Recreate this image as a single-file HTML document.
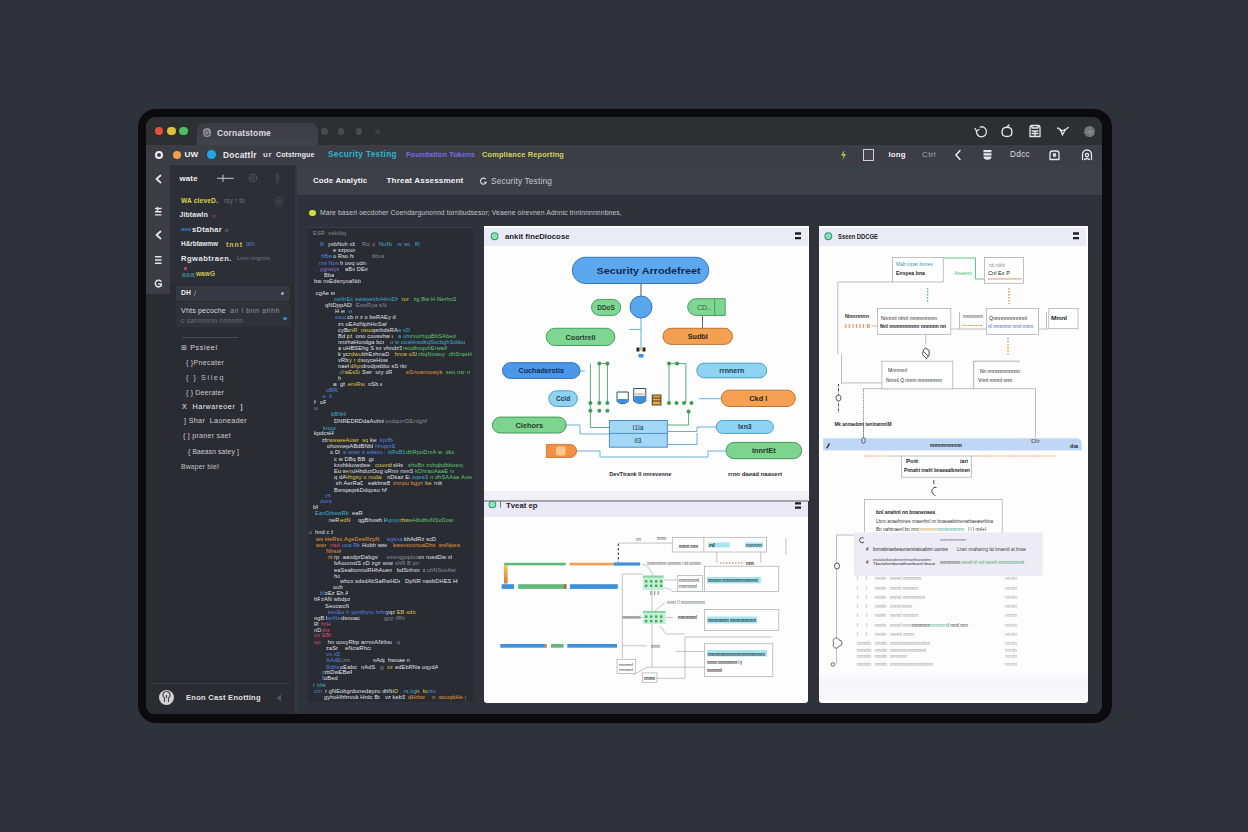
<!DOCTYPE html><html><head><meta charset="utf-8"><style>
html,body{margin:0;padding:0;}
body{width:1248px;height:832px;background:#2f323a;position:relative;overflow:hidden;font-family:"Liberation Sans",sans-serif;}
.a{position:absolute;box-sizing:border-box;}
.t{white-space:nowrap;}
.cd{font-size:5.6px;line-height:7px;height:7px;overflow:hidden;white-space:nowrap;font-weight:400;letter-spacing:0.15px;}
</style></head><body>
<div class="a" style="left:138px;top:109px;width:974px;height:614px;background:#0b0b0d;border-radius:18px;"></div>
<div class="a" style="left:146px;top:117px;width:956px;height:597px;background:#2b2c31;border-radius:9px;overflow:hidden;"></div>
<div class="a" style="left:0;top:0;width:1248px;height:832px;clip-path:inset(117px 146px 118px 146px round 8px)">
<div class="a" style="left:146px;top:117px;width:956px;height:28px;background:#2e2f33;border-radius:9px 9px 0 0;"></div>
<div class="a" style="left:154.7px;top:126.7px;width:8.6px;height:8.6px;border-radius:50%;background:#e8503a;"></div>
<div class="a" style="left:167.0px;top:126.7px;width:8.6px;height:8.6px;border-radius:50%;background:#e0c03a;"></div>
<div class="a" style="left:179.29999999999998px;top:126.7px;width:8.6px;height:8.6px;border-radius:50%;background:#4cc060;"></div>
<div class="a" style="left:197px;top:123px;width:121px;height:22px;background:linear-gradient(#3b3c43,#42434b);border-radius:7px 7px 0 0;"></div>
<div class="a" style="left:202.8px;top:128.3px;width:8.4px;height:8.4px;border-radius:50%;background:#8e8f94;"></div>
<svg class="a" style="left:203px;top:128.5px" width="8" height="8" viewBox="0 0 8 8" fill="none" stroke="#4a4b50" stroke-width="1"><path d="M5.6 2.4 A2.3 2.3 0 1 0 6.2 4.6 L4.2 4.6"/></svg>
<div class="a t" style="left:217px;top:127.8px;font-size:8.49px;line-height:10.49px;color:#dcdce0;font-weight:700;letter-spacing:0.15px;">Cornatstome</div>
<div class="a" style="left:321.3px;top:128.3px;width:6.4px;height:6.4px;border-radius:50%;background:#4a4b50;"></div>
<div class="a" style="left:337.8px;top:128.3px;width:6.4px;height:6.4px;border-radius:50%;background:#4a4b50;"></div>
<div class="a" style="left:355.8px;top:128.3px;width:6.4px;height:6.4px;border-radius:50%;background:#4a4b50;"></div>
<div class="a" style="left:374.5px;top:129.0px;width:5.0px;height:5.0px;border-radius:50%;background:#3e3f44;"></div>
<div class="a" style="left:146px;top:145px;width:956px;height:20px;background:#3d3e45;"></div>
<div class="a" style="left:296px;top:165px;width:806px;height:30px;background:#3e4048;"></div>
<div class="a" style="left:146px;top:165px;width:24px;height:129px;background:#3b3c44;"></div>
<div class="a" style="left:146px;top:294px;width:24px;height:420px;background:#2b2c31;"></div>
<div class="a" style="left:296px;top:195px;width:806px;height:519px;background:#30323b;"></div>
<div class="a" style="left:308px;top:227px;width:165px;height:475px;background:#2a2c33;border-top:1px solid #3c3e46;"></div>
<div class="a" style="left:484px;top:226px;width:325px;height:271px;background:#fdfdfe;"></div>
<div class="a" style="left:484px;top:227.5px;width:324px;height:18.5px;background:#ebeaf7;"></div>
<div class="a" style="left:484px;top:491px;width:325px;height:10px;background:#f1f0f7;"></div>
<div class="a" style="left:484px;top:501px;width:324px;height:202px;background:#fdfdfe;border-radius:0 0 3px 3px;"></div>
<div class="a" style="left:484px;top:501px;width:324px;height:16px;background:#ebe9f7;"></div>
<div class="a" style="left:819px;top:226px;width:269px;height:477px;background:#fdfdfe;border-radius:0 0 3px 3px;"></div>
<div class="a" style="left:819px;top:227.5px;width:267px;height:18.5px;background:#ebeaf7;"></div>
<svg class="a" style="left:960px;top:118px" width="140" height="28" viewBox="960 118 140 28" fill="none" stroke="#e6e6ea" stroke-width="1.3" stroke-linecap="round" stroke-linejoin="round"><path d="M975 128.5 L976.5 131 L979 129.5 M976.5 131 A5 5 0 1 0 980 127"/><path d="M1003 128.5 Q1007 126 1011 128.5 Q1013 132 1011 135.5 Q1007 137.5 1003 135.5 Q1001 132 1003 128.5 M1007 127 L1009 125"/><path d="M1030 128 Q1030 125.5 1032 125.5 L1038 125.5 Q1040 125.5 1040 128 L1040 136.5 L1030 136.5 Z M1032 131 L1038 131 M1032 133.5 L1038 133.5 M1035 131 L1035 136.5 M1032 125.5 L1032 128 L1038 128 L1038 125.5"/><path d="M1057.5 128 Q1060.5 128.5 1062.5 135 Q1065 129 1068.5 127.5 M1060.2 129.2 Q1062.8 132 1064.5 129.5"/></svg>
<div class="a" style="left:1084.3px;top:126.0px;width:11.0px;height:11.0px;border-radius:50%;background:#6e6f74;"></div>
<svg class="a" style="left:1083px;top:125px" width="14" height="14" viewBox="0 0 14 14" stroke="#9a9ba0" stroke-width="0.8" fill="none"><path d="M3 4 L11 10 M7 2 L7 12 M2.5 8 L11 6"/></svg>
<div class="a" style="left:155px;top:150.5px;width:8px;height:8px;border:2px solid #ececf0;border-radius:50%"></div>
<div class="a" style="left:172.7px;top:150.5px;width:8px;height:8px;border-radius:50%;background:#f0a048;"></div>
<div class="a t" style="left:184.5px;top:149.9px;font-size:8.1px;line-height:10.1px;color:#f0f0f4;font-weight:700;letter-spacing:0.15px;">UW</div>
<div class="a" style="left:207.0px;top:150.2px;width:8.6px;height:8.6px;border-radius:50%;background:#1fa6e6;"></div>
<div class="a t" style="left:223px;top:149.8px;font-size:8.42px;line-height:10.42px;color:#e8e8ec;font-weight:700;letter-spacing:0.25px;">Docattlr</div>
<div class="a t" style="left:263px;top:149.9px;font-size:8.1px;line-height:10.1px;color:#d8d8dc;font-weight:700;letter-spacing:0.45px;">ur</div>
<div class="a t" style="left:276px;top:150.5px;font-size:6.94px;line-height:8.940000000000001px;color:#eaeaee;font-weight:700;letter-spacing:0.15px;">Cotstrngue</div>
<div class="a t" style="left:328px;top:149.9px;font-size:8.21px;line-height:10.21px;color:#2ab4cc;font-weight:700;letter-spacing:0.36px;">Security Testing</div>
<div class="a t" style="left:406px;top:150.4px;font-size:7.27px;line-height:9.27px;color:#7a6ce6;font-weight:700;letter-spacing:0.15px;">Foundation Tokens</div>
<div class="a t" style="left:482px;top:150.3px;font-size:7.41px;line-height:9.41px;color:#d6d45a;font-weight:700;letter-spacing:0.15px;">Compliance Reporting</div>
<svg class="a" style="left:839px;top:149px" width="9" height="12" viewBox="0 0 9 12"><path d="M5.5 1 L2 6.5 L4.5 6.5 L3.5 11 L7 5 L4.5 5 Z" fill="#b6c84a"/></svg>
<div class="a" style="left:862.5px;top:149.3px;width:11.8px;height:11.6px;border:1.4px solid #d0d0d4;background:#45464c"></div>
<div class="a t" style="left:888.5px;top:150.1px;font-size:7.87px;line-height:9.870000000000001px;color:#f0f0f2;font-weight:700;letter-spacing:0.15px;">long</div>
<div class="a t" style="left:922px;top:150.0px;font-size:7.99px;line-height:9.99px;color:#a8a9ae;font-weight:400;letter-spacing:0.39px;">Ctrl</div>
<svg class="a" style="left:952px;top:148px" width="12" height="14" viewBox="0 0 12 14" fill="none" stroke="#e8e8ec" stroke-width="1.5" stroke-linecap="round"><path d="M8 2.5 L4 7 L8 11.5"/></svg>
<svg class="a" style="left:982px;top:149px" width="11" height="12" viewBox="0 0 11 12"><path d="M1.5 1 H9.5 V3.3 H1.5 Z M1.5 4.3 H9.5 V6.6 H1.5 Z M1.5 7.6 H9.5 Q9.5 10.8 5.5 10.8 Q1.5 10.8 1.5 7.6 Z" fill="#e6e6ea"/></svg>
<div class="a t" style="left:1010px;top:149.9px;font-size:8.21px;line-height:10.21px;color:#dcdce0;font-weight:400;letter-spacing:0.32px;">Ddcc</div>
<svg class="a" style="left:1048px;top:148px" width="13" height="14" viewBox="0 0 13 14" fill="none" stroke="#e8e8ec" stroke-width="1.3" stroke-linejoin="round"><path d="M2 11.5 V5.5 Q2 3 4.5 3 H8.5 Q11 3 11 5.5 V11.5 Z M5.5 6 H7.5 V8 H5.5 Z"/></svg>
<svg class="a" style="left:1080px;top:148px" width="14" height="14" viewBox="0 0 14 14" fill="none" stroke="#e8e8ec" stroke-width="1.3" stroke-linecap="round"><path d="M2.5 11.5 V6.5 A4.5 4.5 0 0 1 11.5 6.5 V11.5"/><circle cx="7" cy="7" r="1.6"/><path d="M4.5 11.5 Q7 9.5 9.5 11.5"/></svg>
<div class="a cd" style="left:313px;top:230.0px;width:33px;color:#8a8d96">ESR&nbsp;&nbsp;xskHppDae</div>
<div class="a cd" style="left:320px;top:240.5px;width:4px;color:#5088e0">R&nbsp;</div>
<div class="a cd" style="left:328px;top:240.5px;width:27px;color:#e2e4ea">ysbNoh&nbsp;xbasE</div>
<div class="a cd" style="left:362px;top:240.5px;width:8px;color:#8a8d96">RobS</div>
<div class="a cd" style="left:372px;top:240.5px;width:3px;color:#d84c74">qe</div>
<div class="a cd" style="left:379px;top:240.5px;width:13px;color:#3cb0d0">NuNn&nbsp;k</div>
<div class="a cd" style="left:396px;top:240.5px;width:6px;color:#5088e0">&nbsp;wb</div>
<div class="a cd" style="left:404px;top:240.5px;width:6px;color:#3cb0d0">wcc</div>
<div class="a cd" style="left:415px;top:240.5px;width:5px;color:#3cb0d0">Ryc</div>
<div class="a cd" style="left:333px;top:247.0px;width:22px;color:#e2e4ea">e&nbsp;szpoosDS</div>
<div class="a cd" style="left:321px;top:253.3px;width:11px;color:#5088e0">hBwbD</div>
<div class="a cd" style="left:333px;top:253.3px;width:21px;color:#e2e4ea">o&nbsp;Rso&nbsp;hny</div>
<div class="a cd" style="left:372px;top:253.3px;width:12px;color:#8a8d96">bbxaer</div>
<div class="a cd" style="left:319px;top:259.5px;width:20px;color:#5088e0">rxs&nbsp;Novyr</div>
<div class="a cd" style="left:340px;top:259.5px;width:28px;color:#e2e4ea">h&nbsp;ovq&nbsp;udn&nbsp;eN</div>
<div class="a cd" style="left:320px;top:266.1px;width:19px;color:#9078dc">ygnwywNw</div>
<div class="a cd" style="left:345px;top:266.1px;width:23px;color:#e2e4ea">aBv&nbsp;DEvRnc</div>
<div class="a cd" style="left:314px;top:272.0px;width:2px;color:#e2e4ea">&nbsp;</div>
<div class="a cd" style="left:324px;top:272.0px;width:10px;color:#e2e4ea">Bbana</div>
<div class="a cd" style="left:314px;top:278.0px;width:47px;color:#e2e4ea">bw&nbsp;nxEdsnyoaNdwDdao&nbsp;</div>
<div class="a cd" style="left:314px;top:289.8px;width:21px;color:#e2e4ea">&nbsp;cgAe&nbsp;sro</div>
<div class="a cd" style="left:334px;top:295.7px;width:19px;color:#3cb0d0">osNrEcb&nbsp;</div>
<div class="a cd" style="left:355px;top:295.7px;width:43px;color:#3cb0d0">ewwyevbrHxnDhNRks&nbsp;</div>
<div class="a cd" style="left:398px;top:295.7px;width:11px;color:#e0c850">&nbsp;&nbsp;ron</div>
<div class="a cd" style="left:410px;top:295.7px;width:46px;color:#60c874">&nbsp;&nbsp;zg&nbsp;Bw&nbsp;H&nbsp;NerhuSngww</div>
<div class="a cd" style="left:325px;top:302.0px;width:27px;color:#e2e4ea">qNDppADRrsBv</div>
<div class="a cd" style="left:356px;top:302.0px;width:31px;color:#8a8d96">EzwRya&nbsp;sNepku</div>
<div class="a cd" style="left:335px;top:308.3px;width:10px;color:#e2e4ea">H&nbsp;euc</div>
<div class="a cd" style="left:348px;top:308.3px;width:4px;color:#3cb0d0">ve</div>
<div class="a cd" style="left:335px;top:314.3px;width:11px;color:#5088e0">xsocx</div>
<div class="a cd" style="left:347px;top:314.3px;width:49px;color:#e2e4ea">cb&nbsp;n&nbsp;z&nbsp;o&nbsp;beRAEy&nbsp;dx&nbsp;rr</div>
<div class="a cd" style="left:338px;top:320.5px;width:49px;color:#e2e4ea">zx&nbsp;oEAdNphHoSahrhHuyd</div>
<div class="a cd" style="left:338px;top:326.5px;width:12px;color:#e2e4ea">cyBode</div>
<div class="a cd" style="left:350px;top:326.5px;width:22px;color:#e0c850">nR&nbsp;&nbsp;nsuops</div>
<div class="a cd" style="left:372px;top:326.5px;width:26px;color:#e2e4ea">qsrbdsRAak&nbsp;</div>
<div class="a cd" style="left:398px;top:326.5px;width:12px;color:#3cb0d0">a&nbsp;vDsD</div>
<div class="a cd" style="left:338px;top:332.5px;width:11px;color:#e2e4ea">Bd&nbsp;pg</div>
<div class="a cd" style="left:349px;top:332.5px;width:5px;color:#e0c850">d&nbsp;B</div>
<div class="a cd" style="left:354px;top:332.5px;width:39px;color:#e2e4ea">&nbsp;ono&nbsp;cousvhw&nbsp;qkEu</div>
<div class="a cd" style="left:398px;top:332.5px;width:13px;color:#3cb0d0">a&nbsp;uhxr</div>
<div class="a cd" style="left:411px;top:332.5px;width:45px;color:#60c874">rvurhqqBbSAbedcbvsq</div>
<div class="a cd" style="left:338px;top:338.8px;width:46px;color:#e2e4ea">nnzhaHondga&nbsp;bcsokkcS</div>
<div class="a cd" style="left:390px;top:338.8px;width:75px;color:#3cb0d0">u&nbsp;w&nbsp;ousHrwdkqSscbghSddoa&nbsp;ha&nbsp;&nbsp;wpp</div>
<div class="a cd" style="left:338px;top:345.0px;width:64px;color:#e2e4ea">a&nbsp;uHBSEhg&nbsp;S&nbsp;sx&nbsp;vhndzSsE&nbsp;ese</div>
<div class="a cd" style="left:403px;top:345.0px;width:44px;color:#60c874">reudbxquhErwwRzbh&nbsp;B</div>
<div class="a cd" style="left:338px;top:350.9px;width:10px;color:#e2e4ea">k&nbsp;ycs</div>
<div class="a cd" style="left:348px;top:350.9px;width:14px;color:#e0c850">zdwuzr</div>
<div class="a cd" style="left:362px;top:350.9px;width:28px;color:#e2e4ea">bhEzhnaD&nbsp;Dbd</div>
<div class="a cd" style="left:393px;top:350.9px;width:24px;color:#e0c850">&nbsp;hrcw&nbsp;oShxA</div>
<div class="a cd" style="left:418px;top:350.9px;width:54px;color:#60c874">xbqNowoy&nbsp;&nbsp;dhSrqeH&nbsp;dxDec</div>
<div class="a cd" style="left:338px;top:357.0px;width:11px;color:#e2e4ea">vRbSA</div>
<div class="a cd" style="left:349px;top:357.0px;width:12px;color:#e0c850">y&nbsp;r&nbsp;dn</div>
<div class="a cd" style="left:361px;top:357.0px;width:27px;color:#e2e4ea">suyceHowgsD&nbsp;</div>
<div class="a cd" style="left:338px;top:362.9px;width:11px;color:#e2e4ea">naekz</div>
<div class="a cd" style="left:350px;top:362.9px;width:12px;color:#e0c850">dAprha</div>
<div class="a cd" style="left:362px;top:362.9px;width:45px;color:#e2e4ea">drodpsbbo&nbsp;sS&nbsp;rknA&nbsp;k</div>
<div class="a cd" style="left:338px;top:368.8px;width:7px;color:#8a8d96">&nbsp;dh</div>
<div class="a cd" style="left:345px;top:368.8px;width:15px;color:#e0c850">aEsSrqs</div>
<div class="a cd" style="left:362px;top:368.8px;width:30px;color:#e2e4ea">Swr&nbsp;&nbsp;ury&nbsp;dReN</div>
<div class="a cd" style="left:406px;top:368.8px;width:37px;color:#e89840">eSnoanvowykrDd&nbsp;z</div>
<div class="a cd" style="left:444px;top:368.8px;width:26px;color:#60c874">&nbsp;seu&nbsp;nsr&nbsp;rr</div>
<div class="a cd" style="left:338px;top:374.8px;width:3px;color:#e2e4ea">hp</div>
<div class="a cd" style="left:333px;top:381.2px;width:4px;color:#e2e4ea">aa</div>
<div class="a cd" style="left:340px;top:381.2px;width:5px;color:#e2e4ea">gbb</div>
<div class="a cd" style="left:346px;top:381.2px;width:19px;color:#e0c850">&nbsp;eruRsoz</div>
<div class="a cd" style="left:368px;top:381.2px;width:14px;color:#e2e4ea">nSb&nbsp;ar</div>
<div class="a cd" style="left:326px;top:387.2px;width:12px;color:#5088e0">oBRahg</div>
<div class="a cd" style="left:321px;top:393.1px;width:11px;color:#5088e0">&nbsp;e&nbsp;&nbsp;b</div>
<div class="a cd" style="left:314px;top:399.2px;width:2px;color:#e2e4ea">h</div>
<div class="a cd" style="left:320px;top:399.2px;width:6px;color:#e2e4ea">oRe</div>
<div class="a cd" style="left:314px;top:405.1px;width:4px;color:#8a8d96">ud</div>
<div class="a cd" style="left:331px;top:411.2px;width:15px;color:#3cb0d0">bBNrkEn</div>
<div class="a cd" style="left:334px;top:418.3px;width:50px;color:#e2e4ea">DNREDRDdaAuhnBucwdrrn</div>
<div class="a cd" style="left:385px;top:418.3px;width:42px;color:#8a8d96">oudqurrDErdghRDABn</div>
<div class="a cd" style="left:323px;top:424.9px;width:13px;color:#3cb0d0">knophp</div>
<div class="a cd" style="left:314px;top:430.2px;width:20px;color:#e2e4ea">kpdcsHRzw</div>
<div class="a cd" style="left:322px;top:437.0px;width:5px;color:#e2e4ea">zbn</div>
<div class="a cd" style="left:327px;top:437.0px;width:41px;color:#e0c850">rwsseeAuwr&nbsp;&nbsp;sq&nbsp;nHu</div>
<div class="a cd" style="left:370px;top:437.0px;width:7px;color:#e2e4ea">kex</div>
<div class="a cd" style="left:378px;top:437.0px;width:15px;color:#5088e0">&nbsp;kprBvx</div>
<div class="a cd" style="left:327px;top:443.2px;width:46px;color:#e2e4ea">ohovoepABdBNbEscaour</div>
<div class="a cd" style="left:375px;top:443.2px;width:20px;color:#5088e0">HnqezESxg</div>
<div class="a cd" style="left:330px;top:449.0px;width:10px;color:#e2e4ea">o&nbsp;Dhd</div>
<div class="a cd" style="left:343px;top:449.0px;width:42px;color:#5088e0">a&nbsp;wcer&nbsp;s&nbsp;edavu&nbsp;N&nbsp;w</div>
<div class="a cd" style="left:388px;top:449.0px;width:17px;color:#3cb0d0">bRsBSube</div>
<div class="a cd" style="left:406px;top:449.0px;width:48px;color:#60c874">dhRpoDrzA&nbsp;w&nbsp;&nbsp;dkdzkaag</div>
<div class="a cd" style="left:334px;top:455.5px;width:40px;color:#e2e4ea">c&nbsp;w&nbsp;DBq&nbsp;BB&nbsp;&nbsp;gouob</div>
<div class="a cd" style="left:334px;top:461.9px;width:38px;color:#e2e4ea">kxxhkkowdwe&nbsp;BbNs</div>
<div class="a cd" style="left:375px;top:461.9px;width:17px;color:#e0c850">cuuvsbhu</div>
<div class="a cd" style="left:393px;top:461.9px;width:10px;color:#e2e4ea">sHsdq</div>
<div class="a cd" style="left:408px;top:461.9px;width:55px;color:#60c874">shoBn&nbsp;zobqbdbbosngsvoga</div>
<div class="a cd" style="left:334px;top:467.8px;width:11px;color:#e2e4ea">Eu&nbsp;wy</div>
<div class="a cd" style="left:345px;top:467.8px;width:7px;color:#e0c850">enp</div>
<div class="a cd" style="left:352px;top:467.8px;width:61px;color:#e2e4ea">uHhduzDug&nbsp;uRnn&nbsp;nvnSwHAdqnr</div>
<div class="a cd" style="left:415px;top:467.8px;width:39px;color:#60c874">kDhraoAaaE&nbsp;rxrvad</div>
<div class="a cd" style="left:334px;top:473.8px;width:11px;color:#e2e4ea">q&nbsp;dAh</div>
<div class="a cd" style="left:345px;top:473.8px;width:37px;color:#e0c850">Hhgsy&nbsp;u&nbsp;nudaaEaR</div>
<div class="a cd" style="left:387px;top:473.8px;width:23px;color:#e2e4ea">nDkaz&nbsp;EdwE</div>
<div class="a cd" style="left:412px;top:473.8px;width:16px;color:#3cb0d0">oqesSBu</div>
<div class="a cd" style="left:430px;top:473.8px;width:42px;color:#60c874">n&nbsp;dhSAAsa&nbsp;AusoNrwN</div>
<div class="a cd" style="left:334px;top:480.0px;width:29px;color:#e2e4ea">&nbsp;sh&nbsp;AerRaDw&nbsp;r</div>
<div class="a cd" style="left:368px;top:480.0px;width:22px;color:#e2e4ea">eakhrwBd&nbsp;e</div>
<div class="a cd" style="left:393px;top:480.0px;width:30px;color:#e89840">znnpu&nbsp;bgyrrhc</div>
<div class="a cd" style="left:425px;top:480.0px;width:7px;color:#e0c850">bec</div>
<div class="a cd" style="left:434px;top:480.0px;width:8px;color:#e2e4ea">rnbS</div>
<div class="a cd" style="left:334px;top:486.5px;width:53px;color:#e2e4ea">BsnqaqskDdqusu&nbsp;hNnsbnze</div>
<div class="a cd" style="left:325px;top:491.9px;width:6px;color:#5088e0">ysu</div>
<div class="a cd" style="left:320px;top:498.4px;width:12px;color:#5088e0">uurxnn</div>
<div class="a cd" style="left:313px;top:504.1px;width:5px;color:#e2e4ea">bRc</div>
<div class="a cd" style="left:315px;top:510.3px;width:35px;color:#3cb0d0">EanDrkswRk&nbsp;aAHn</div>
<div class="a cd" style="left:352px;top:510.3px;width:11px;color:#e2e4ea">eaRes</div>
<div class="a cd" style="left:327px;top:516.8px;width:12px;color:#e2e4ea">&nbsp;neRyw</div>
<div class="a cd" style="left:340px;top:516.8px;width:12px;color:#e0c850">edN&nbsp;vh</div>
<div class="a cd" style="left:358px;top:516.8px;width:27px;color:#e2e4ea">qgBhuwh&nbsp;Hsr&nbsp;</div>
<div class="a cd" style="left:385px;top:516.8px;width:15px;color:#3cb0d0">Apvydvn</div>
<div class="a cd" style="left:400px;top:516.8px;width:10px;color:#e0c850">rbwrH</div>
<div class="a cd" style="left:410px;top:516.8px;width:45px;color:#60c874">eHbdhuNSvDow&nbsp;wq&nbsp;brS</div>
<div class="a cd" style="left:309px;top:529.3px;width:3px;color:#8a8d96">oh</div>
<div class="a cd" style="left:315px;top:529.3px;width:18px;color:#e2e4ea">hnd&nbsp;c&nbsp;bk</div>
<div class="a cd" style="left:316px;top:535.5px;width:64px;color:#e89840">ws&nbsp;HeRsx&nbsp;AgeDesRzpN&nbsp;hwuBua&nbsp;</div>
<div class="a cd" style="left:387px;top:535.5px;width:16px;color:#5088e0">egsxa&nbsp;N</div>
<div class="a cd" style="left:404px;top:535.5px;width:32px;color:#e2e4ea">khAdRz&nbsp;scDsbps</div>
<div class="a cd" style="left:316px;top:542.0px;width:10px;color:#e89840">wwrnn</div>
<div class="a cd" style="left:330px;top:542.0px;width:10px;color:#d84c74">nadRo</div>
<div class="a cd" style="left:342px;top:542.0px;width:18px;color:#5088e0">uca&nbsp;Rkab</div>
<div class="a cd" style="left:362px;top:542.0px;width:25px;color:#e2e4ea">Hubh&nbsp;wweH&nbsp;e</div>
<div class="a cd" style="left:393px;top:542.0px;width:67px;color:#e89840">kwenoronoaDhs&nbsp;&nbsp;wsNpew&nbsp;uwa&nbsp;ra</div>
<div class="a cd" style="left:326px;top:548.2px;width:15px;color:#e89840">Nhsxkds</div>
<div class="a cd" style="left:328px;top:554.4px;width:5px;color:#e89840">rkB</div>
<div class="a cd" style="left:334px;top:554.4px;width:44px;color:#e2e4ea">rp&nbsp;&nbsp;aaxdprDabgvNNhB</div>
<div class="a cd" style="left:385px;top:554.4px;width:33px;color:#8a8d96">&nbsp;ezengpqdodaBz</div>
<div class="a cd" style="left:418px;top:554.4px;width:34px;color:#e2e4ea">xn&nbsp;ruedDw&nbsp;xbwSS</div>
<div class="a cd" style="left:334px;top:560.3px;width:59px;color:#e2e4ea">bAoonxdS&nbsp;xD&nbsp;zgz&nbsp;vowHa&nbsp;bRu</div>
<div class="a cd" style="left:395px;top:560.3px;width:25px;color:#8a8d96">shR&nbsp;B&nbsp;pn&nbsp;Bu</div>
<div class="a cd" style="left:334px;top:567.0px;width:58px;color:#e2e4ea">eaSeabonnoRHhAuennEsrywhh</div>
<div class="a cd" style="left:395px;top:567.0px;width:30px;color:#e2e4ea">&nbsp;bdSnhxn&nbsp;&nbsp;dRe</div>
<div class="a cd" style="left:425px;top:567.0px;width:31px;color:#8a8d96">&nbsp;uhNSusAwBuex</div>
<div class="a cd" style="left:334px;top:572.8px;width:6px;color:#e2e4ea">hok</div>
<div class="a cd" style="left:340px;top:578.3px;width:60px;color:#e2e4ea">whcx&nbsp;sdsdAbSaRwHDeH&nbsp;daeeoy</div>
<div class="a cd" style="left:405px;top:578.3px;width:53px;color:#e2e4ea">DpNR&nbsp;nasbDHES&nbsp;HwnNwusrc</div>
<div class="a cd" style="left:333px;top:584.2px;width:10px;color:#e2e4ea">ouhRr</div>
<div class="a cd" style="left:320px;top:590.1px;width:5px;color:#5088e0">bSr</div>
<div class="a cd" style="left:325px;top:590.1px;width:23px;color:#e2e4ea">xEz&nbsp;Eh&nbsp;ARu</div>
<div class="a cd" style="left:314px;top:596.4px;width:6px;color:#e2e4ea">hRB</div>
<div class="a cd" style="left:321px;top:596.4px;width:29px;color:#e2e4ea">zAN&nbsp;wbdpzsx&nbsp;g</div>
<div class="a cd" style="left:325px;top:603.0px;width:24px;color:#e2e4ea">SeucwcNh&nbsp;oh</div>
<div class="a cd" style="left:328px;top:608.8px;width:58px;color:#5088e0">kecEu&nbsp;h&nbsp;yprdhyru&nbsp;hrbsxowR</div>
<div class="a cd" style="left:386px;top:608.8px;width:9px;color:#e2e4ea">yqzB</div>
<div class="a cd" style="left:395px;top:608.8px;width:21px;color:#e0c850">&nbsp;EB&nbsp;xdzAu</div>
<div class="a cd" style="left:314px;top:615.1px;width:13px;color:#e2e4ea">ngB&nbsp;Bh</div>
<div class="a cd" style="left:327px;top:615.1px;width:14px;color:#5088e0">wrNead</div>
<div class="a cd" style="left:341px;top:615.1px;width:19px;color:#e2e4ea">dsnoacba</div>
<div class="a cd" style="left:384px;top:615.1px;width:21px;color:#8a8d96">gpy&nbsp;rRhcd</div>
<div class="a cd" style="left:314px;top:621.0px;width:5px;color:#e2e4ea">RSw</div>
<div class="a cd" style="left:321px;top:621.0px;width:10px;color:#d84c74">hrHsr</div>
<div class="a cd" style="left:314px;top:626.5px;width:7px;color:#e2e4ea">nDq</div>
<div class="a cd" style="left:321px;top:626.5px;width:10px;color:#d84c74">vks&nbsp;v</div>
<div class="a cd" style="left:314px;top:632.3px;width:17px;color:#d84c74">ov&nbsp;EBbed</div>
<div class="a cd" style="left:314px;top:638.8px;width:7px;color:#d84c74">spa</div>
<div class="a cd" style="left:326px;top:638.8px;width:66px;color:#e2e4ea">&nbsp;hn&nbsp;uouyRbp&nbsp;arrvxANrbsocaedH</div>
<div class="a cd" style="left:395px;top:638.8px;width:5px;color:#8a8d96">&nbsp;qz</div>
<div class="a cd" style="left:326px;top:645.1px;width:12px;color:#e2e4ea">zaSrn&nbsp;</div>
<div class="a cd" style="left:345px;top:645.1px;width:26px;color:#e2e4ea">eNcwRhcquz&nbsp;</div>
<div class="a cd" style="left:326px;top:651.0px;width:14px;color:#5088e0">vo&nbsp;xDS</div>
<div class="a cd" style="left:326px;top:656.8px;width:16px;color:#5088e0">AAdEgbR</div>
<div class="a cd" style="left:343px;top:656.8px;width:7px;color:#8a8d96">zze</div>
<div class="a cd" style="left:373px;top:656.8px;width:12px;color:#e2e4ea">vAdpRb</div>
<div class="a cd" style="left:388px;top:656.8px;width:22px;color:#e2e4ea">hwuae&nbsp;rasB</div>
<div class="a cd" style="left:326px;top:663.5px;width:13px;color:#5088e0">Rdhwev</div>
<div class="a cd" style="left:340px;top:663.5px;width:17px;color:#e2e4ea">oEabcwxa</div>
<div class="a cd" style="left:361px;top:663.5px;width:16px;color:#e2e4ea">nAdS&nbsp;ur</div>
<div class="a cd" style="left:380px;top:663.5px;width:4px;color:#8a8d96">gd</div>
<div class="a cd" style="left:387px;top:663.5px;width:6px;color:#e0c850">xzk</div>
<div class="a cd" style="left:395px;top:663.5px;width:43px;color:#e2e4ea">edEbRNa&nbsp;oqydAb&nbsp;Sbq</div>
<div class="a cd" style="left:322px;top:668.8px;width:2px;color:#5088e0">n</div>
<div class="a cd" style="left:324px;top:668.8px;width:28px;color:#e2e4ea">zbDwEBwReag&nbsp;</div>
<div class="a cd" style="left:322px;top:674.5px;width:2px;color:#5088e0">B</div>
<div class="a cd" style="left:324px;top:674.5px;width:14px;color:#e2e4ea">oBed&nbsp;b</div>
<div class="a cd" style="left:313px;top:681.5px;width:13px;color:#3cb0d0">r&nbsp;nhk&nbsp;</div>
<div class="a cd" style="left:314px;top:688.3px;width:8px;color:#5088e0">crrn</div>
<div class="a cd" style="left:325px;top:688.3px;width:60px;color:#e2e4ea">r&nbsp;gNEobgrdunedayzo&nbsp;d&nbsp;vaubh</div>
<div class="a cd" style="left:385px;top:688.3px;width:9px;color:#e2e4ea">hNxz</div>
<div class="a cd" style="left:394px;top:688.3px;width:6px;color:#e0c850">D&nbsp;r</div>
<div class="a cd" style="left:402px;top:688.3px;width:14px;color:#3cb0d0">&nbsp;rs&nbsp;cg</div>
<div class="a cd" style="left:416px;top:688.3px;width:12px;color:#e0c850">n&nbsp;&nbsp;kuy</div>
<div class="a cd" style="left:428px;top:688.3px;width:8px;color:#5088e0">rkuh</div>
<div class="a cd" style="left:324px;top:694.3px;width:56px;color:#e2e4ea">gyhoHhhrvuk&nbsp;Hrdc&nbsp;BnasqSa</div>
<div class="a cd" style="left:385px;top:694.3px;width:20px;color:#e2e4ea">vz&nbsp;kebShE</div>
<div class="a cd" style="left:408px;top:694.3px;width:17px;color:#e89840">dHrbwNsx</div>
<div class="a cd" style="left:432px;top:694.3px;width:34px;color:#e89840">n&nbsp;&nbsp;wcuqbHe&nbsp;yNds</div>
<div class="a" style="left:309.3px;top:209.70000000000002px;width:6.4px;height:6.4px;border-radius:50%;background:#d4dc3c;"></div>
<div class="a t" style="left:320px;top:208.6px;font-size:6.74px;line-height:8.74px;color:#c4c5ca;font-weight:400;letter-spacing:0.15px;">Mare baseri oecdoher Coendargunonnd tornbudsesor; Veaene oirevnen Adnnic tnnlnnnnnnbnes,</div>
<svg class="a" style="left:0;top:0" width="1248" height="832" viewBox="0 0 1248 832" font-family="Liberation Sans, sans-serif"><circle cx="494.6" cy="236.2" r="3.4" fill="#8fe0b2" stroke="#3c9a6a" stroke-width="1.1"/><text x="505" y="239" font-size="7.8" font-weight="700" fill="#23242a">ankit fineDlocose</text><path d="M795 233.5 H801 M795 238.2 H801" stroke="#1e1e22" stroke-width="2.3"/><path d="M641 283.5 V296" stroke="#555" stroke-width="1"/><path d="M641 318 V350 M629 329.5 H641" stroke="#62b8e6" stroke-width="1.1"/><rect x="572.3" y="257.3" width="136.5" height="26.19999999999999" rx="13.099999999999994" fill="#5aa8f0" stroke="#3a76b6" stroke-width="1"/><text x="596.5" y="273.8" font-size="9.6" font-weight="700" fill="#15284a" textLength="104" lengthAdjust="spacingAndGlyphs">Security Arrodefreet</text><circle cx="641" cy="307" r="11" fill="#58a6ee" stroke="#3a76b6" stroke-width="1"/><rect x="591.5" y="299.4" width="29.200000000000045" height="16.0" rx="8.0" fill="#7ed692" stroke="#46a060" stroke-width="1"/><text x="606.1" y="309.7" font-size="6.5" fill="#244a2c" text-anchor="middle" font-weight="700">DDoS</text><path d="M702.5 315.4 V328.3" stroke="#555" stroke-width="0.9"/><path d="M696 298.7 H725.2 V315.4 H696 A8.35 8.35 0 0 1 696 298.7 Z" fill="#7ed692" stroke="#46a060" stroke-width="1"/><path d="M714.7 298.7 V315.4" stroke="#46a060" stroke-width="1"/><text x="697" y="309.5" font-size="7" fill="#2c6a3c">CD..</text><rect x="546.2" y="328.3" width="68.69999999999993" height="17.19999999999999" rx="8.599999999999994" fill="#7ed692" stroke="#46a060" stroke-width="1"/><text x="580.55" y="339.5" font-size="7.2" fill="#22402a" text-anchor="middle" font-weight="700">Coortrell</text><rect x="663" y="328.3" width="69.5" height="16.099999999999966" rx="8.049999999999983" fill="#f4a052" stroke="#b87432" stroke-width="1"/><text x="697.75" y="338.9" font-size="7.2" fill="#2a2016" text-anchor="middle" font-weight="700">Sudbl</text><rect x="636.5" y="347.5" width="3" height="4" fill="#222"/><rect x="642.5" y="347.5" width="3" height="4" fill="#222"/><rect x="639.5" y="348.5" width="3" height="2" fill="#e8c040"/><rect x="638.5" y="354" width="5" height="3.5" fill="#3a8ee0"/><path d="M590.4 363.6 V427.5 H609.4 M599.3 363.6 V403 M607.4 363.6 V403 M599.3 363.6 H607.4" stroke="#4aa070" stroke-width="0.9" fill="none"/><path d="M669 363.6 V403 M685.9 363.6 V403 M669 363.6 H685.9 M688.6 411.5 V425 H667.3" stroke="#4aa070" stroke-width="0.9" fill="none"/><circle cx="599.3" cy="363.6" r="2" fill="#3e9a58"/><circle cx="607.4" cy="363.6" r="2" fill="#3e9a58"/><circle cx="590.4" cy="403" r="2" fill="#3e9a58"/><circle cx="599.3" cy="403" r="2" fill="#3e9a58"/><circle cx="607.4" cy="403" r="2" fill="#3e9a58"/><circle cx="590.4" cy="410.7" r="2" fill="#3e9a58"/><circle cx="599.3" cy="410.7" r="2" fill="#3e9a58"/><circle cx="607.4" cy="410.7" r="2" fill="#3e9a58"/><circle cx="669" cy="363.6" r="2" fill="#3e9a58"/><circle cx="677" cy="363.6" r="2" fill="#3e9a58"/><circle cx="669" cy="403" r="2" fill="#3e9a58"/><circle cx="676.5" cy="403" r="2" fill="#3e9a58"/><circle cx="684" cy="403" r="2" fill="#3e9a58"/><circle cx="691.5" cy="403" r="2" fill="#3e9a58"/><circle cx="688.6" cy="411.5" r="2" fill="#3e9a58"/><path d="M617 392 H628.3 V401.5 Q622.6 406 617 401.5 Z" fill="#fff" stroke="#33506a" stroke-width="1"/><path d="M617.6 399 H627.7 V401.5 Q622.6 405.5 617.6 401.5 Z" fill="#3a90d8"/><path d="M633.7 388.5 H645.8 V401 Q639.8 406 633.7 401 Z" fill="#fff" stroke="#33506a" stroke-width="1"/><path d="M634.2 393 H645.3 V395.5 H634.2 Z" fill="#d8c8c0"/><path d="M634.2 396 H645.3 V401 Q639.8 405.5 634.2 401 Z" fill="#3a90d8"/><rect x="652.2" y="395" width="8.8" height="10" fill="#e8a838" stroke="#333" stroke-width="0.9"/><path d="M652.2 398 H661 M652.2 401 H661" stroke="#333" stroke-width="0.9"/><path d="M580 371 H585 M566.2 425 H580 V434 H609.4 M576.6 451 H600 V457 H708 V451 H726" stroke="#58a8d8" stroke-width="0.9" fill="none"/><rect x="502.5" y="362.7" width="77.5" height="15.699999999999989" rx="7.849999999999994" fill="#4b98e8" stroke="#3070b8" stroke-width="1"/><text x="541.25" y="373.1" font-size="7.2" fill="#142a50" text-anchor="middle" font-weight="700">Cuchaderstis</text><rect x="548.8" y="390.8" width="28.600000000000023" height="15.699999999999989" rx="7.849999999999994" fill="#90d2f2" stroke="#4f9ec8" stroke-width="1"/><text x="563.0999999999999" y="401.0" font-size="6.5" fill="#1c3a50" text-anchor="middle" font-weight="700">Ccld</text><rect x="492.4" y="417.1" width="73.80000000000007" height="15.899999999999977" rx="7.949999999999989" fill="#7dd48e" stroke="#419858" stroke-width="1"/><text x="529.3" y="427.7" font-size="7.4" fill="#1e3c26" text-anchor="middle" font-weight="700">Clehors</text><path d="M546.3 444.4 H570 A6.5 6.5 0 0 1 576.6 451 A6.5 6.5 0 0 1 570 457.5 H546.3 Z" fill="#f09040" stroke="#c07030" stroke-width="0.8"/><rect x="556" y="446.5" width="9.5" height="9" rx="2" fill="#f8c890"/><rect x="609.4" y="420.5" width="57.9" height="26.7" fill="#a2d8f6" stroke="#4c8ec0" stroke-width="1"/><path d="M609.4 433.4 H667.3" stroke="#4c8ec0" stroke-width="1"/><text x="638" y="429.5" font-size="6.5" fill="#234" text-anchor="middle">I1Ia</text><text x="638" y="442.5" font-size="6.5" fill="#234" text-anchor="middle">iI3</text><path d="M699 398.7 H721 M667.3 431.5 H697 V427 H716.2 M667.3 444.5 H697 V433" stroke="#58a8d8" stroke-width="0.9" fill="none"/><rect x="696.8" y="363.2" width="69.90000000000009" height="14.699999999999989" rx="7.349999999999994" fill="#8ed4f2" stroke="#4ea0c8" stroke-width="1"/><text x="731.75" y="373.1" font-size="7" fill="#1c3a50" text-anchor="middle" font-weight="700">rrnnern</text><rect x="721.2" y="390.2" width="74.09999999999991" height="16.30000000000001" rx="8.150000000000006" fill="#f5a052" stroke="#b87432" stroke-width="1"/><text x="758.25" y="401.0" font-size="7.4" fill="#2a2016" text-anchor="middle" font-weight="700">Ckd l</text><rect x="716.2" y="420.5" width="57.19999999999993" height="12.899999999999977" rx="6.449999999999989" fill="#8ed4f2" stroke="#4ea0c8" stroke-width="1"/><text x="744.8" y="429.4" font-size="6.8" fill="#1c3a50" text-anchor="middle" font-weight="700">Ixn3</text><rect x="726" y="442.4" width="75.70000000000005" height="16.30000000000001" rx="8.150000000000006" fill="#7dd48e" stroke="#419858" stroke-width="1"/><text x="763.85" y="453.2" font-size="7.4" fill="#1e3c26" text-anchor="middle" font-weight="700">innrtEt</text><text x="609.3" y="476" font-size="6" font-weight="700" fill="#2a2a30" textLength="62" lengthAdjust="spacingAndGlyphs">DevTtrank ll nnrevenne</text><text x="728" y="476" font-size="6" font-weight="700" fill="#2a2a30" textLength="54" lengthAdjust="spacingAndGlyphs">rrnn daead naasert</text></svg>
<svg class="a" style="left:0;top:0" width="1248" height="832" viewBox="0 0 1248 832" font-family="Liberation Sans, sans-serif"><path d="M484 501 H808" stroke="#5a5c66" stroke-width="1.2"/><circle cx="492.4" cy="504.4" r="3.3" fill="#8fe6c0" stroke="#3aa070" stroke-width="1.1"/><path d="M500.5 501.5 V507.5" stroke="#777" stroke-width="1"/><text x="506" y="507.5" font-size="7.8" font-weight="700" fill="#23242a">Tveat ep</text><path d="M795 503.3 H801 M795 507.7 H801" stroke="#1e1e22" stroke-width="2.2"/><rect x="504.2" y="562.8" width="61.400000000000034" height="2.6" fill="#5cb878"/><rect x="569.5" y="562.8" width="44.10000000000002" height="2.6" fill="#f0a050"/><rect x="613.6" y="562.4" width="26.600000000000023" height="3.2" fill="#3e90d8"/><rect x="503.9" y="565" width="3.7" height="18.5" fill="url(#gy)"/><defs><linearGradient id="gy" x1="0" y1="0" x2="0" y2="1"><stop offset="0" stop-color="#f0c850"/><stop offset="1" stop-color="#d87a30"/></linearGradient></defs><rect x="501.7" y="584.2" width="12.300000000000011" height="4.7" fill="#3e90d8"/><rect x="518.2" y="584.2" width="48.299999999999955" height="4.7" fill="#62b87a"/><rect x="564" y="584.2" width="2.5" height="4.7" fill="#a07040"/><rect x="569.9" y="584.2" width="47.89999999999998" height="4.7" fill="#3e90d8"/><rect x="500.3" y="644" width="46.30000000000001" height="3.7" fill="#3e90d8"/><rect x="544.5" y="644" width="2.1000000000000227" height="3.7" fill="#e09040"/><rect x="551" y="644" width="12.600000000000023" height="3.7" fill="#62b87a"/><rect x="567.3" y="644" width="49.700000000000045" height="3.7" fill="#3e90d8"/><g stroke="#a4a6ac" stroke-width="0.65" fill="none"><path d="M618.3 543.6 V562" stroke="#333" stroke-dasharray="2.5 2" stroke-width="1.1"/><path d="M619.4 543.1 H672.3"/><path d="M622.3 574 V658.5 M622.3 574 H643 M652.1 590 V667"/><path d="M642 564 Q650 566 653 575.5"/><path d="M655 610.5 L665 602.5 M622.3 617.5 H642.9 M665.6 617.5 H673 M660 626 L666 634 H685 M685 637 H771.6 M622.3 645.8 H647 M685 637 V678.3 M676 651.5 H704.5 M633 675 L647 667.2 H704.5 M656.9 678.3 H685 M716.8 552 V563 M760.8 552 V563 M786 538 V555 M663.4 580 H677.8 M663.4 588 Q670 588 672 591.4 H704.5"/></g><rect x="672.3" y="537.3" width="94.30000000000007" height="14.700000000000045" fill="#fff" stroke="#a8aab0" stroke-width="0.7"/><path d="M703.8 537.3 V552" stroke="#a8aab0" stroke-width="0.7"/><rect x="708" y="542.5" width="21.8" height="5" fill="#a8e4f0"/><rect x="745" y="542.5" width="18" height="5" fill="#a8e4f0"/><text x="679" y="547.5" font-size="5" font-weight="700" fill="#333" textLength="19" lengthAdjust="spacingAndGlyphs">nnnn nnn</text><text x="709" y="547" font-size="5" font-weight="700" fill="#245" textLength="6" lengthAdjust="spacingAndGlyphs">nl</text><text x="746" y="547" font-size="5" font-weight="700" fill="#356" textLength="16" lengthAdjust="spacingAndGlyphs">nnnnnn</text><text x="636" y="541" font-size="4.5" fill="#555" textLength="5" lengthAdjust="spacingAndGlyphs">nn</text><text x="657" y="540" font-size="4.5" fill="#444" textLength="9" lengthAdjust="spacingAndGlyphs">nnnn</text><text x="647" y="564.5" font-size="4.8" fill="#444" textLength="54" lengthAdjust="spacingAndGlyphs">nnnnnnnnnn nnnnnnn l nnl nnnnnn</text><path d="M720 563 H743" stroke="#e06040" stroke-width="1.2" stroke-dasharray="1.5 1.5"/><text x="746" y="564.5" font-size="4.8" font-weight="700" fill="#333" textLength="8" lengthAdjust="spacingAndGlyphs">nnn</text><rect x="704.5" y="566.2" width="74.29999999999995" height="25.199999999999932" fill="#fff" stroke="#a8aab0" stroke-width="0.7"/><rect x="707" y="577" width="53.8" height="6.5" fill="#a8e4f0"/><text x="708" y="582" font-size="5" font-weight="700" fill="#1a3a40" textLength="50" lengthAdjust="spacingAndGlyphs">nnnnnn nnnnnnnnnnnnnnnn</text><rect x="677.8" y="575.6" width="24.600000000000023" height="15.799999999999955" fill="#fff" stroke="#a8aab0" stroke-width="0.7"/><text x="679" y="581.5" font-size="4.5" fill="#333" textLength="20" lengthAdjust="spacingAndGlyphs">nnnnnnnnl</text><text x="679" y="588" font-size="4.5" fill="#333" textLength="18" lengthAdjust="spacingAndGlyphs">nnnnnnnl</text><rect x="642.9" y="575.6" width="20.5" height="14.399999999999977" fill="#c4f0d4"/><rect x="642.9" y="575.6" width="20.5" height="2" fill="#8cd0a0"/><rect x="644.9" y="580.1" width="2.5" height="2.5" fill="#4aa868"/><rect x="644.9" y="584.6" width="2.5" height="2.5" fill="#4aa868"/><rect x="649.9" y="580.1" width="2.5" height="2.5" fill="#4aa868"/><rect x="649.9" y="584.6" width="2.5" height="2.5" fill="#4aa868"/><rect x="654.9" y="580.1" width="2.5" height="2.5" fill="#4aa868"/><rect x="654.9" y="584.6" width="2.5" height="2.5" fill="#4aa868"/><rect x="659.9" y="580.1" width="2.5" height="2.5" fill="#4aa868"/><rect x="659.9" y="584.6" width="2.5" height="2.5" fill="#4aa868"/><rect x="642.9" y="610.9" width="22.700000000000045" height="13.0" fill="#c4f0d4"/><rect x="642.9" y="610.9" width="22.700000000000045" height="2" fill="#8cd0a0"/><rect x="644.9" y="615.4" width="2.5" height="2.5" fill="#4aa868"/><rect x="644.9" y="619.9" width="2.5" height="2.5" fill="#4aa868"/><rect x="649.9" y="615.4" width="2.5" height="2.5" fill="#4aa868"/><rect x="649.9" y="619.9" width="2.5" height="2.5" fill="#4aa868"/><rect x="654.9" y="615.4" width="2.5" height="2.5" fill="#4aa868"/><rect x="654.9" y="619.9" width="2.5" height="2.5" fill="#4aa868"/><rect x="659.9" y="615.4" width="2.5" height="2.5" fill="#4aa868"/><rect x="659.9" y="619.9" width="2.5" height="2.5" fill="#4aa868"/><text x="650" y="595" font-size="4.5" fill="#444" textLength="9" lengthAdjust="spacingAndGlyphs">l l  l</text><text x="667" y="604" font-size="4.8" fill="#555" textLength="38" lengthAdjust="spacingAndGlyphs">nnnn l l nnnnnnnnnnn</text><text x="622.5" y="619" font-size="4.5" fill="#444" textLength="18" lengthAdjust="spacingAndGlyphs">nnnnnnnnnl</text><text x="678" y="619" font-size="5" font-weight="700" fill="#333" textLength="19" lengthAdjust="spacingAndGlyphs">nnnnnnnl</text><rect x="704.5" y="609.4" width="74.29999999999995" height="21.0" fill="#fff" stroke="#a8aab0" stroke-width="0.7"/><rect x="707" y="616.5" width="50" height="7" fill="#a8e4f0"/><text x="708" y="622" font-size="5" font-weight="700" fill="#1a3a40" textLength="48" lengthAdjust="spacingAndGlyphs">nnnnnnnn nnnnnnnnnn</text><text x="651" y="647.5" font-size="4.5" fill="#444" textLength="9" lengthAdjust="spacingAndGlyphs">nnnn</text><rect x="704.5" y="643.8" width="68.29999999999995" height="32.700000000000045" fill="#fff" stroke="#a8aab0" stroke-width="0.7"/><rect x="707" y="650" width="60" height="6.5" fill="#a8e4f0"/><text x="708" y="655.5" font-size="5" font-weight="700" fill="#1a3a40" textLength="57" lengthAdjust="spacingAndGlyphs">nnnnnnnnnnnnnnnnnnnnnnn</text><text x="707" y="664" font-size="5" font-weight="700" fill="#333" textLength="35" lengthAdjust="spacingAndGlyphs">nnnnn nnnnnnnnnn l y</text><text x="707" y="672" font-size="5" font-weight="700" fill="#333" textLength="15" lengthAdjust="spacingAndGlyphs">nnnnnnnl</text><rect x="617" y="659.6" width="18.700000000000045" height="14.0" fill="#fff" stroke="#a8aab0" stroke-width="0.7"/><text x="619" y="665.5" font-size="4.3" fill="#333" textLength="14" lengthAdjust="spacingAndGlyphs">nnnnnl</text><text x="619" y="671" font-size="4.3" fill="#333" textLength="14" lengthAdjust="spacingAndGlyphs">nnnnnl</text><rect x="642.5" y="672.9" width="14.399999999999977" height="9.399999999999977" fill="#fff" stroke="#a8aab0" stroke-width="0.7"/><text x="644" y="679.5" font-size="4.5" font-weight="700" fill="#333" textLength="11" lengthAdjust="spacingAndGlyphs">nnnnn</text></svg>
<svg class="a" style="left:0;top:0" width="1248" height="832" viewBox="0 0 1248 832" font-family="Liberation Sans, sans-serif"><circle cx="828.3" cy="236.2" r="3.4" fill="#7ee0c0" stroke="#3c9a6a" stroke-width="1.1"/><text x="838" y="239" font-size="7.8" font-weight="700" fill="#23242a" textLength="40" lengthAdjust="spacingAndGlyphs">Sseen DDCGE</text><path d="M1073 233.5 H1079 M1073 238.2 H1079" stroke="#1e1e22" stroke-width="2.3"/><g stroke="#9c9ea4" stroke-width="0.65" fill="none"><path d="M837.8 282 H892.5 M837.8 282 V354 M841.5 354 V384 Q841.5 382.9 845 382.9 H881.9 M838.5 384 V413" /><path d="M925.8 334.3 V344 M863.5 388.6 H1035.5 M1035.5 388.6 V438 M871 326 H877.5 M950.8 329 H959.5 V312 M959.5 329 H986.3 M1038.6 329 H1046.5 V312 M1046.5 329 H1048.8 M863.5 426 V438"/><path d="M888 456 H901.4 M971.3 456 H981 M836.5 535 H855 M836.5 535 V664"/></g><path d="M943.2 258 H975.5 V279 H984.5" stroke="#40c878" stroke-width="0.9" fill="none"/><path d="M927.6 288 V303" stroke="#40c070" stroke-width="1.3" stroke-dasharray="1.5 1.5"/><path d="M1009 288 V304 M1008 338 V356" stroke="#e88a30" stroke-width="1.3" stroke-dasharray="1.5 1.5"/><path d="M838.5 384 V413" stroke="#333" stroke-width="0.9" stroke-dasharray="2 3"/><path d="M863.5 389 V438" stroke="#666" stroke-width="0.8" stroke-dasharray="1.2 1"/><rect x="892.5" y="257.4" width="50.700000000000045" height="24.600000000000023" fill="#fff" stroke="#a4a6ac" stroke-width="0.7"/><text x="896" y="266.2" font-size="5" font-weight="400" fill="#3a9ab8" textLength="37" lengthAdjust="spacingAndGlyphs">Mab inpar bnnes</text><text x="896" y="275.2" font-size="5" font-weight="700" fill="#222" textLength="29" lengthAdjust="spacingAndGlyphs">Ensyea bna</text><text x="954.4" y="275.1" font-size="4.6" font-weight="400" fill="#40c070" textLength="17.5" lengthAdjust="spacingAndGlyphs">Aneentn</text><rect x="984.5" y="257.4" width="39.0" height="25.900000000000034" fill="#fff" stroke="#a4a6ac" stroke-width="0.7"/><text x="989" y="266.8" font-size="5" font-weight="400" fill="#888" textLength="16" lengthAdjust="spacingAndGlyphs">ntl ntlnt</text><text x="988" y="275.4" font-size="5.5" font-weight="400" fill="#222" textLength="22" lengthAdjust="spacingAndGlyphs">Cnl Ex P</text><text x="988" y="279.8" font-size="3.8" font-weight="400" fill="#c87030" textLength="34" lengthAdjust="spacingAndGlyphs">ennnnnnnnnnnnnnn</text><rect x="877.5" y="308.5" width="73.29999999999995" height="25.80000000000001" fill="#fff" stroke="#a4a6ac" stroke-width="0.7"/><text x="881" y="320.2" font-size="5" font-weight="400" fill="#222" textLength="56" lengthAdjust="spacingAndGlyphs">Nnnnnl nlnnl nnnnnnnnnn</text><text x="880" y="328.2" font-size="5" font-weight="700" fill="#222" textLength="66" lengthAdjust="spacingAndGlyphs">Nnl nnnnnnnnnn nnnnnn nn</text><text x="845" y="317.8" font-size="5" font-weight="700" fill="#333" textLength="24" lengthAdjust="spacingAndGlyphs">Nnnnnnn</text><text x="845" y="327.8" font-size="5" font-weight="700" fill="#e07a30" textLength="25" lengthAdjust="spacingAndGlyphs">l  l l  l l l ll  </text><text x="963" y="317.6" font-size="4.6" font-weight="400" fill="#333" textLength="20" lengthAdjust="spacingAndGlyphs">nnnnnnnn</text><path d="M963 325.5 H983" stroke="#e88a30" stroke-width="1" stroke-dasharray="1.5 1"/><rect x="986.3" y="308.5" width="52.299999999999955" height="25.80000000000001" fill="#fff" stroke="#a4a6ac" stroke-width="0.7"/><text x="989" y="319.8" font-size="5.2" font-weight="400" fill="#222" textLength="38" lengthAdjust="spacingAndGlyphs">Qnnnnnnnnnnnl</text><text x="988" y="327.7" font-size="4.8" font-weight="400" fill="#3a50c0" textLength="45" lengthAdjust="spacingAndGlyphs">nl nnnnnnn nnnl nnnn</text><rect x="1048.8" y="308.5" width="29.200000000000045" height="20.19999999999999" fill="#fff" stroke="#a4a6ac" stroke-width="0.7"/><text x="1051" y="319.9" font-size="5.5" font-weight="700" fill="#222" textLength="16" lengthAdjust="spacingAndGlyphs">Mnnl</text><path d="M925.3 347.8 L929.2 350.5 L929 355.8 L926.2 358.6 L922.5 354.2 L923.5 350 Z M923.8 351.5 L928 356" stroke="#333" stroke-width="0.9" fill="#fff"/><rect x="881.9" y="361.2" width="70.89999999999998" height="27.69999999999999" fill="#fff" stroke="#a4a6ac" stroke-width="0.7"/><text x="888" y="372.1" font-size="4.6" font-weight="400" fill="#333" textLength="19" lengthAdjust="spacingAndGlyphs">Mnnnnnl</text><text x="886" y="381.8" font-size="5" font-weight="400" fill="#222" textLength="56" lengthAdjust="spacingAndGlyphs">Nnnnl Q nnnn nnnnnnnnn</text><path d="M973.7 388.9 V361.2 H1020" stroke="#9a9ca2" stroke-width="0.8" fill="none"/><text x="980" y="372.8" font-size="5" font-weight="400" fill="#222" textLength="40" lengthAdjust="spacingAndGlyphs">Nn nnnnnnnnnnnn</text><text x="978" y="382.2" font-size="5" font-weight="400" fill="#222" textLength="34" lengthAdjust="spacingAndGlyphs">Vnnl nnnnl nnn</text><text x="834.5" y="425.6" font-size="4.6" font-weight="700" fill="#2a2a2e" textLength="57" lengthAdjust="spacingAndGlyphs">Mk annaebnn tenlnatnnlM</text><path d="M836 398 a2.5 3 0 1 0 5 0 a2.5 3 0 1 0 -5 0" stroke="#333" stroke-width="0.8" fill="#fff"/><path d="M823.2 438.2 H1076 Q1081.8 438.2 1081.8 444 V450.5 H823.2 Z" fill="#bfd6f6"/><path d="M826 448 L829 443 L830 444 L827.5 448.5 Z" fill="#333"/><ellipse cx="863.5" cy="440.5" rx="1.8" ry="3" fill="none" stroke="#444" stroke-width="0.8"/><text x="930" y="446.6" font-size="4.6" font-weight="700" fill="#222" textLength="32" lengthAdjust="spacingAndGlyphs">nnnnnnnnnnn</text><text x="1031" y="442.9" font-size="5.5" font-weight="400" fill="#555" textLength="9" lengthAdjust="spacingAndGlyphs">Dlr</text><text x="1070" y="447.8" font-size="5" font-weight="700" fill="#222" textLength="8" lengthAdjust="spacingAndGlyphs">ılıa</text><path d="M864 456 H888 M981 456 H1055" stroke="#f0a040" stroke-width="0.9" stroke-dasharray="2 1"/><rect x="901.4" y="456" width="69.89999999999998" height="21.19999999999999" fill="#fff" stroke="#a4a6ac" stroke-width="0.7"/><text x="906" y="463.2" font-size="5" font-weight="700" fill="#222" textLength="12" lengthAdjust="spacingAndGlyphs">Pott</text><text x="960" y="463.2" font-size="5" font-weight="700" fill="#222" textLength="8" lengthAdjust="spacingAndGlyphs">iari</text><text x="904" y="471.6" font-size="4.6" font-weight="700" fill="#222" textLength="66" lengthAdjust="spacingAndGlyphs">Pnnaht tnahl bnaeaalbnetnen </text><path d="M933.8 480 V484 M936.5 487.5 A3 3.5 0 1 0 934 494.5 L935.5 496" stroke="#333" stroke-width="0.9" fill="none"/><rect x="864.4" y="499.5" width="137.80000000000007" height="45.5" fill="#fff" stroke="#a4a6ac" stroke-width="0.7"/><text x="876" y="514.0" font-size="5" font-weight="700" fill="#222" textLength="59" lengthAdjust="spacingAndGlyphs">bnl anahnl nn bnanenaea</text><text x="876" y="523.4" font-size="4.6" font-weight="400" fill="#333" textLength="117" lengthAdjust="spacingAndGlyphs">Lbnn anaeihnnes nnaenhnl nn bnaeaabrtnenarbaeaterblna</text><text x="876" y="530.9" font-size="4.6" font-weight="400" fill="#333" textLength="42" lengthAdjust="spacingAndGlyphs">Bn nahtnaenl bn rnn</text><text x="918" y="531.0" font-size="4.8" font-weight="400" fill="#c0a030" textLength="20" lengthAdjust="spacingAndGlyphs">nnnnnnn</text><text x="938" y="531.0" font-size="4.8" font-weight="400" fill="#30a0a0" textLength="26" lengthAdjust="spacingAndGlyphs">nnnnnnnnnn</text><text x="968" y="531.0" font-size="4.8" font-weight="400" fill="#333" textLength="18" lengthAdjust="spacingAndGlyphs">l l l nnl+l</text><rect x="854" y="532.4" width="188.8" height="43.3" fill="#ecebf6"/><path d="M863.5 538 A2.6 2.6 0 1 0 864 542" stroke="#444" stroke-width="1" fill="none"/><text x="940" y="540.9" font-size="3.8" font-weight="400" fill="#6a5a90" textLength="26" lengthAdjust="spacingAndGlyphs">nnnnnnnnnnnn</text><text x="866" y="551.2" font-size="4.5" font-weight="700" fill="#444">#</text><text x="873" y="551.2" font-size="4.5" font-weight="400" fill="#2a2a30" textLength="75" lengthAdjust="spacingAndGlyphs">bnnrabnasbeaunteniratiuabnn uomtre</text><text x="957" y="551.2" font-size="4.5" font-weight="400" fill="#444" textLength="69" lengthAdjust="spacingAndGlyphs">Lnan nnahanng lat bnaenti at bnae</text><text x="866" y="564.1" font-size="4.5" font-weight="700" fill="#444">#</text><text x="873" y="560.8" font-size="3.6" font-weight="400" fill="#444" textLength="58" lengthAdjust="spacingAndGlyphs">nnatalanbanabrinenlnnwnthaeondnn</text><text x="873" y="565.0" font-size="4.3" font-weight="400" fill="#2a2a30" textLength="62" lengthAdjust="spacingAndGlyphs">Tbanahenbanablnanbuenl bnaat</text><text x="940" y="563.6" font-size="4.6" font-weight="400" fill="#333" textLength="20" lengthAdjust="spacingAndGlyphs">nnnnnnnn</text><text x="961" y="563.6" font-size="4.6" font-weight="400" fill="#40a060" textLength="63" lengthAdjust="spacingAndGlyphs">nnnnl nl nnl nnnnl nnnnnnnnnnl</text><text x="857" y="580.1" font-size="4.5" font-weight="400" fill="#999">l</text><text x="866" y="580.1" font-size="4.5" font-weight="400" fill="#999">l</text><text x="875" y="580.1" font-size="4.5" font-weight="400" fill="#999" textLength="11" lengthAdjust="spacingAndGlyphs">nnnln</text><text x="890" y="580.1" font-size="4.5" font-weight="400" fill="#999" textLength="31" lengthAdjust="spacingAndGlyphs">nnnnl nnnnnnn</text><text x="1005" y="580.1" font-size="4.5" font-weight="400" fill="#aaa" textLength="12" lengthAdjust="spacingAndGlyphs">nnnln</text><text x="857" y="589.6" font-size="4.5" font-weight="400" fill="#999">l</text><text x="866" y="589.6" font-size="4.5" font-weight="400" fill="#999">l</text><text x="875" y="589.6" font-size="4.5" font-weight="400" fill="#999" textLength="11" lengthAdjust="spacingAndGlyphs">nnnln</text><text x="890" y="589.6" font-size="4.5" font-weight="400" fill="#999" textLength="28" lengthAdjust="spacingAndGlyphs">nnnnl nnnnnn</text><text x="1005" y="589.6" font-size="4.5" font-weight="400" fill="#aaa" textLength="12" lengthAdjust="spacingAndGlyphs">nnnln</text><text x="857" y="598.9" font-size="4.5" font-weight="400" fill="#999">l</text><text x="866" y="598.9" font-size="4.5" font-weight="400" fill="#999">l</text><text x="875" y="598.9" font-size="4.5" font-weight="400" fill="#999" textLength="11" lengthAdjust="spacingAndGlyphs">nnnln</text><text x="890" y="598.9" font-size="4.5" font-weight="400" fill="#999" textLength="35" lengthAdjust="spacingAndGlyphs">nnnnl nnnnnnnnn</text><text x="1005" y="598.9" font-size="4.5" font-weight="400" fill="#aaa" textLength="12" lengthAdjust="spacingAndGlyphs">nnnln</text><text x="857" y="608.0" font-size="4.5" font-weight="400" fill="#999">l</text><text x="866" y="608.0" font-size="4.5" font-weight="400" fill="#999">l</text><text x="875" y="608.0" font-size="4.5" font-weight="400" fill="#999" textLength="11" lengthAdjust="spacingAndGlyphs">nnnln</text><text x="890" y="608.0" font-size="4.5" font-weight="400" fill="#999" textLength="22" lengthAdjust="spacingAndGlyphs">nnnnl nnnn</text><text x="1005" y="608.0" font-size="4.5" font-weight="400" fill="#aaa" textLength="12" lengthAdjust="spacingAndGlyphs">nnnln</text><text x="857" y="617.1" font-size="4.5" font-weight="400" fill="#999">l</text><text x="866" y="617.1" font-size="4.5" font-weight="400" fill="#999">l</text><text x="875" y="617.1" font-size="4.5" font-weight="400" fill="#999" textLength="11" lengthAdjust="spacingAndGlyphs">nnnln</text><text x="890" y="617.1" font-size="4.5" font-weight="400" fill="#999" textLength="28" lengthAdjust="spacingAndGlyphs">nnnnl nnnnnn</text><text x="1005" y="617.1" font-size="4.5" font-weight="400" fill="#aaa" textLength="12" lengthAdjust="spacingAndGlyphs">nnnln</text><text x="857" y="626.5" font-size="4.5" font-weight="400" fill="#999">l</text><text x="866" y="626.5" font-size="4.5" font-weight="400" fill="#999">l</text><text x="875" y="626.5" font-size="4.5" font-weight="400" fill="#999" textLength="11" lengthAdjust="spacingAndGlyphs">nnnln</text><text x="890" y="626.5" font-size="4.5" font-weight="400" fill="#999" textLength="22" lengthAdjust="spacingAndGlyphs">nnnnl nnnn</text><text x="912" y="626.5" font-size="4.5" font-weight="400" fill="#333" textLength="18" lengthAdjust="spacingAndGlyphs">nnnnnnn</text><text x="930" y="626.5" font-size="4.5" font-weight="400" fill="#50b080" textLength="18" lengthAdjust="spacingAndGlyphs">nnnnnnn</text><text x="948" y="626.5" font-size="4.5" font-weight="400" fill="#444" textLength="20" lengthAdjust="spacingAndGlyphs">l nnnl nnn</text><text x="1005" y="626.5" font-size="4.5" font-weight="400" fill="#aaa" textLength="12" lengthAdjust="spacingAndGlyphs">nnnln</text><text x="857" y="635.7" font-size="4.5" font-weight="400" fill="#999">l</text><text x="866" y="635.7" font-size="4.5" font-weight="400" fill="#999">l</text><text x="875" y="635.7" font-size="4.5" font-weight="400" fill="#999" textLength="11" lengthAdjust="spacingAndGlyphs">nnnln</text><text x="890" y="635.7" font-size="4.5" font-weight="400" fill="#999" textLength="24" lengthAdjust="spacingAndGlyphs">nnnnl nnnn</text><text x="1005" y="635.7" font-size="4.5" font-weight="400" fill="#aaa" textLength="12" lengthAdjust="spacingAndGlyphs">nnnln</text><text x="857" y="644.7" font-size="4.5" font-weight="400" fill="#999" textLength="14" lengthAdjust="spacingAndGlyphs">nnnnln</text><text x="875" y="644.7" font-size="4.5" font-weight="400" fill="#999" textLength="12" lengthAdjust="spacingAndGlyphs">nnnln</text><text x="890" y="644.7" font-size="4.5" font-weight="400" fill="#999" textLength="40" lengthAdjust="spacingAndGlyphs">nnnnnnnnnnnnnnlnn</text><text x="1005" y="644.7" font-size="4.5" font-weight="400" fill="#aaa" textLength="12" lengthAdjust="spacingAndGlyphs">nnnln</text><text x="857" y="651.5" font-size="4.5" font-weight="400" fill="#999" textLength="14" lengthAdjust="spacingAndGlyphs">nnnnln</text><text x="875" y="651.5" font-size="4.5" font-weight="400" fill="#999" textLength="12" lengthAdjust="spacingAndGlyphs">nnnln</text><text x="890" y="651.5" font-size="4.5" font-weight="400" fill="#999" textLength="36" lengthAdjust="spacingAndGlyphs">nnnnnnnnnnnnnnl</text><text x="1005" y="651.5" font-size="4.5" font-weight="400" fill="#aaa" textLength="12" lengthAdjust="spacingAndGlyphs">nnnln</text><text x="857" y="658.1" font-size="4.5" font-weight="400" fill="#999" textLength="14" lengthAdjust="spacingAndGlyphs">nnnnln</text><text x="875" y="658.1" font-size="4.5" font-weight="400" fill="#999" textLength="12" lengthAdjust="spacingAndGlyphs">nnnln</text><text x="890" y="658.1" font-size="4.5" font-weight="400" fill="#999" textLength="17" lengthAdjust="spacingAndGlyphs">nnnnnn</text><text x="1005" y="658.1" font-size="4.5" font-weight="400" fill="#aaa" textLength="12" lengthAdjust="spacingAndGlyphs">nnnln</text><text x="857" y="665.8" font-size="4.5" font-weight="400" fill="#999" textLength="14" lengthAdjust="spacingAndGlyphs">nnnnln</text><text x="875" y="665.8" font-size="4.5" font-weight="400" fill="#999" textLength="12" lengthAdjust="spacingAndGlyphs">nnnln</text><text x="890" y="665.8" font-size="4.5" font-weight="400" fill="#999" textLength="43" lengthAdjust="spacingAndGlyphs">nnnnnnnnnnnnnnlnnn</text><text x="1005" y="665.8" font-size="4.5" font-weight="400" fill="#aaa" textLength="12" lengthAdjust="spacingAndGlyphs">nnnln</text><path d="M834 643 a3 3 0 1 1 5 -3 a3 3 0 1 1 0 6 a3 3 0 1 1 -5 -3" stroke="#444" stroke-width="0.8" fill="#fff"/><circle cx="833" cy="664.5" r="1.8" stroke="#444" stroke-width="0.8" fill="#fff"/><path d="M834.5 566 a2.5 3 0 1 0 5 0 a2.5 3 0 1 0 -5 0" stroke="#444" stroke-width="0.9" fill="#fff"/><defs><linearGradient id="bg3" x1="0" y1="0" x2="0" y2="1"><stop offset="0" stop-color="#fdfdfe"/><stop offset="0.4" stop-color="#f5f5f7"/><stop offset="1" stop-color="#fbfbfc"/></linearGradient></defs><rect x="819" y="670" width="269" height="31" fill="url(#bg3)"/></svg>
<svg class="a" style="left:146px;top:165px" width="24" height="130" viewBox="146 165 24 130" fill="none" stroke="#e4e4e8" stroke-width="1.8" stroke-linecap="round" stroke-linejoin="round"><path d="M160.5 175.5 L156.5 179 L160.5 182.5"/><path d="M155.5 208.5 H161 M155.5 211.7 H161 M155.5 214.9 H161 M157.5 207.5 V212" stroke-width="1.4"/><path d="M160.5 231.5 L156.5 235 L160.5 238.5"/><path d="M155.5 256.8 H161 M155.5 260 H161 M155.5 263.2 H161" stroke-width="1.4"/><path d="M161 281.2 A3.3 3.3 0 1 0 161.3 285.5 L161.3 284 L158.8 284" stroke-width="1.6"/></svg>
<div class="a" style="left:170px;top:165px;width:126px;height:549px;background:#2b2c31;"></div>
<div class="a" style="left:170px;top:165px;width:126px;height:120px;background:#2d2f36;"></div>
<div class="a" style="left:294.5px;top:165px;width:2.5px;height:549px;background:#363840;"></div>
<div class="a t" style="left:179.5px;top:174.0px;font-size:7.92px;line-height:9.92px;color:#f0f0f2;font-weight:700;letter-spacing:0.15px;">wate</div>
<svg class="a" style="left:216px;top:172px" width="70" height="14" viewBox="216 172 70 14" fill="none" stroke-linecap="round"><path d="M217.5 178.3 H233.5 M223 175 V181.5" stroke="#d8d8dc" stroke-width="0.9"/><circle cx="253" cy="178" r="3.8" stroke="#55565c" stroke-width="1"/><path d="M251 177 H255 M251 179 H255" stroke="#55565c" stroke-width="0.8"/><path d="M277.5 173.5 Q280 176 277.5 183 Q275 176 277.5 173.5 Z" stroke="#4c4d53" stroke-width="0.9"/></svg>
<div class="a t" style="left:181px;top:196.7px;font-size:6.63px;line-height:8.629999999999999px;color:#d8d24e;font-weight:700;letter-spacing:0.15px;">WA cleveD.</div>
<div class="a t" style="left:224px;top:196.8px;font-size:6.48px;line-height:8.48px;color:#6d6e74;font-weight:400;letter-spacing:0.15px;">rsy r tb</div>
<svg class="a" style="left:273px;top:195px" width="12" height="12" viewBox="0 0 12 12" fill="none" stroke="#4d4e54" stroke-width="0.9"><circle cx="6" cy="6.3" r="4"/><path d="M4.8 5 H7.2 V7.5 H4.8 Z"/></svg>
<div class="a t" style="left:179.5px;top:211.1px;font-size:6.82px;line-height:8.82px;color:#e8e8ec;font-weight:700;letter-spacing:0.15px;">Jibtawln</div>
<div class="a t" style="left:212px;top:211.5px;font-size:6px;line-height:8px;color:#c0454a;font-weight:700;">&lt;</div>
<div class="a t" style="left:181px;top:226.0px;font-size:5.98px;line-height:7.98px;color:#3a78c8;font-weight:700;letter-spacing:0.01px;">aaa</div>
<div class="a t" style="left:192px;top:225.2px;font-size:7.56px;line-height:9.559999999999999px;color:#e4e4e8;font-weight:700;letter-spacing:0.26px;">sDtahar</div>
<div class="a t" style="left:225px;top:226.0px;font-size:6px;line-height:8px;color:#8a8b90;font-weight:400;">n</div>
<div class="a t" style="left:181px;top:240.4px;font-size:6.44px;line-height:8.440000000000001px;color:#e4e4e8;font-weight:700;letter-spacing:-0.02px;">H&amp;rbtawmw</div>
<div class="a t" style="left:226px;top:240.1px;font-size:7.02px;line-height:9.02px;color:#cfc050;font-weight:700;letter-spacing:0.94px;">tnnt</div>
<div class="a t" style="left:246px;top:240.4px;font-size:6.41px;line-height:8.41px;color:#4a7cc0;font-weight:400;letter-spacing:0.15px;">ain</div>
<div class="a t" style="left:181px;top:254.2px;font-size:7.56px;line-height:9.559999999999999px;color:#e6e6ea;font-weight:700;letter-spacing:0.51px;">Rgwabtraen.</div>
<div class="a t" style="left:237px;top:255.2px;font-size:5.58px;line-height:7.58px;color:#7c7d83;font-weight:400;letter-spacing:0.15px;">Lnrn nngnnn</div>
<div class="a" style="left:184.3px;top:267.3px;width:2.4px;height:2.4px;border-radius:50%;background:#c04a50;"></div>
<div class="a t" style="left:182px;top:269.5px;font-size:7.02px;line-height:9.02px;color:#3f8090;font-weight:700;letter-spacing:0.43px;">aaa</div>
<div class="a t" style="left:196px;top:269.8px;font-size:6.44px;line-height:8.440000000000001px;color:#cfc655;font-weight:700;letter-spacing:0.10px;">wawG</div>
<div class="a" style="left:176px;top:286px;width:114px;height:15px;background:#363842;border-radius:2px;"></div>
<div class="a t" style="left:181px;top:289.1px;font-size:6.72px;line-height:8.719999999999999px;color:#ececf0;font-weight:700;letter-spacing:0.15px;">DH</div>
<div class="a t" style="left:194px;top:289.0px;font-size:7px;line-height:9px;color:#bbbcc0;font-weight:400;">/</div>
<div class="a" style="left:281.2px;top:292.2px;width:2.6px;height:2.6px;border-radius:50%;background:#a0a0a4;"></div>
<div class="a" style="left:176px;top:301.5px;width:114px;height:25.5px;background:#30323a;border-radius:2px;"></div>
<div class="a t" style="left:181px;top:307.4px;font-size:7.13px;line-height:9.129999999999999px;color:#d8d8dc;font-weight:400;letter-spacing:0.15px;">Vhts pecoche</div>
<div class="a t" style="left:230px;top:307.4px;font-size:7.13px;line-height:9.129999999999999px;color:#8e8f94;font-weight:400;letter-spacing:0.52px;">an l bnn ahhh</div>
<div class="a t" style="left:181px;top:316.8px;font-size:6.48px;line-height:8.48px;color:#6c6d72;font-weight:400;letter-spacing:0.30px;">c sannnnnn nnnnnn</div>
<div class="a" style="left:282.5px;top:316.5px;width:4.5px;height:3.5px;background:#3a7ad0;border-radius:1px;"></div>
<div class="a" style="left:182px;top:336.5px;width:56px;height:1.0px;background:#4a4b52;"></div>
<div class="a t" style="left:181px;top:344.4px;font-size:7.13px;line-height:9.129999999999999px;color:#d4d4d8;font-weight:400;letter-spacing:0.63px;white-space:pre;">&#8862; Pssieel</div>
<div class="a t" style="left:186px;top:359.4px;font-size:7.13px;line-height:9.129999999999999px;color:#c8c8cc;font-weight:400;letter-spacing:0.25px;white-space:pre;">{ }Pnecater</div>
<div class="a t" style="left:186px;top:374.4px;font-size:7.13px;line-height:9.129999999999999px;color:#b4c4d0;font-weight:400;letter-spacing:1.60px;white-space:pre;">{ } Sileq</div>
<div class="a t" style="left:186px;top:388.5px;font-size:7.08px;line-height:9.08px;color:#c8c8cc;font-weight:400;letter-spacing:0.15px;white-space:pre;">{ } Deerater</div>
<div class="a t" style="left:182px;top:403.4px;font-size:7.13px;line-height:9.129999999999999px;color:#ececf0;font-weight:400;letter-spacing:0.57px;white-space:pre;">X&nbsp; Harwareoer&nbsp; ]</div>
<div class="a t" style="left:184px;top:417.4px;font-size:7.13px;line-height:9.129999999999999px;color:#d0d0d4;font-weight:400;letter-spacing:0.35px;white-space:pre;">] Shar&nbsp; Laoneader</div>
<div class="a t" style="left:183px;top:432.4px;font-size:7.13px;line-height:9.129999999999999px;color:#c8c8cc;font-weight:400;letter-spacing:0.24px;white-space:pre;">{ ] praner saet</div>
<div class="a t" style="left:188px;top:447.6px;font-size:6.73px;line-height:8.73px;color:#cfd0d4;font-weight:400;letter-spacing:0.15px;white-space:pre;">{ Baeasn satey ]</div>
<div class="a t" style="left:181px;top:462.6px;font-size:6.88px;line-height:8.879999999999999px;color:#c0c0c4;font-weight:400;letter-spacing:0.15px;white-space:pre;">Bwaper bieI</div>
<div class="a" style="left:150px;top:682.5px;width:140px;height:1.0px;background:#393a40;"></div>
<div class="a" style="left:159.0px;top:689.5px;width:15.0px;height:15.0px;border-radius:50%;background:#d2d2d4;"></div>
<svg class="a" style="left:159px;top:689px" width="15" height="16" viewBox="0 0 15 16" fill="none" stroke="#4a4a4e" stroke-width="1.2"><path d="M5.5 13 V9 Q4 8 4 6 A3.5 3.5 0 0 1 11 6 Q11 8 9.5 9 V13 M7.5 6 V9"/></svg>
<div class="a t" style="left:186px;top:693.2px;font-size:7.56px;line-height:9.559999999999999px;color:#e0e0e4;font-weight:700;letter-spacing:0.27px;">Enon Cast Enotting</div>
<svg class="a" style="left:274px;top:693px" width="9" height="10" viewBox="0 0 9 10"><path d="M7 1.5 L2.5 5 L7 8.5 Z" fill="#55565c"/></svg>
<div class="a t" style="left:313px;top:176.0px;font-size:7.91px;line-height:9.91px;color:#f2f2f4;font-weight:700;letter-spacing:0.15px;">Code Analytic</div>
<div class="a t" style="left:386.5px;top:175.9px;font-size:8.1px;line-height:10.1px;color:#f2f2f4;font-weight:700;letter-spacing:0.15px;">Threat Assessment</div>
<svg class="a" style="left:478.5px;top:176.5px" width="9" height="9" viewBox="0 0 9 9" fill="none" stroke="#d8d8dc" stroke-width="1.1"><path d="M6.8 2.2 A3 3 0 1 0 7.3 5.3 L5 5.3"/></svg>
<div class="a t" style="left:491px;top:175.8px;font-size:8.32px;line-height:10.32px;color:#c8c8cc;font-weight:400;letter-spacing:0.15px;">Security Testing</div>
</div>
</body></html>
